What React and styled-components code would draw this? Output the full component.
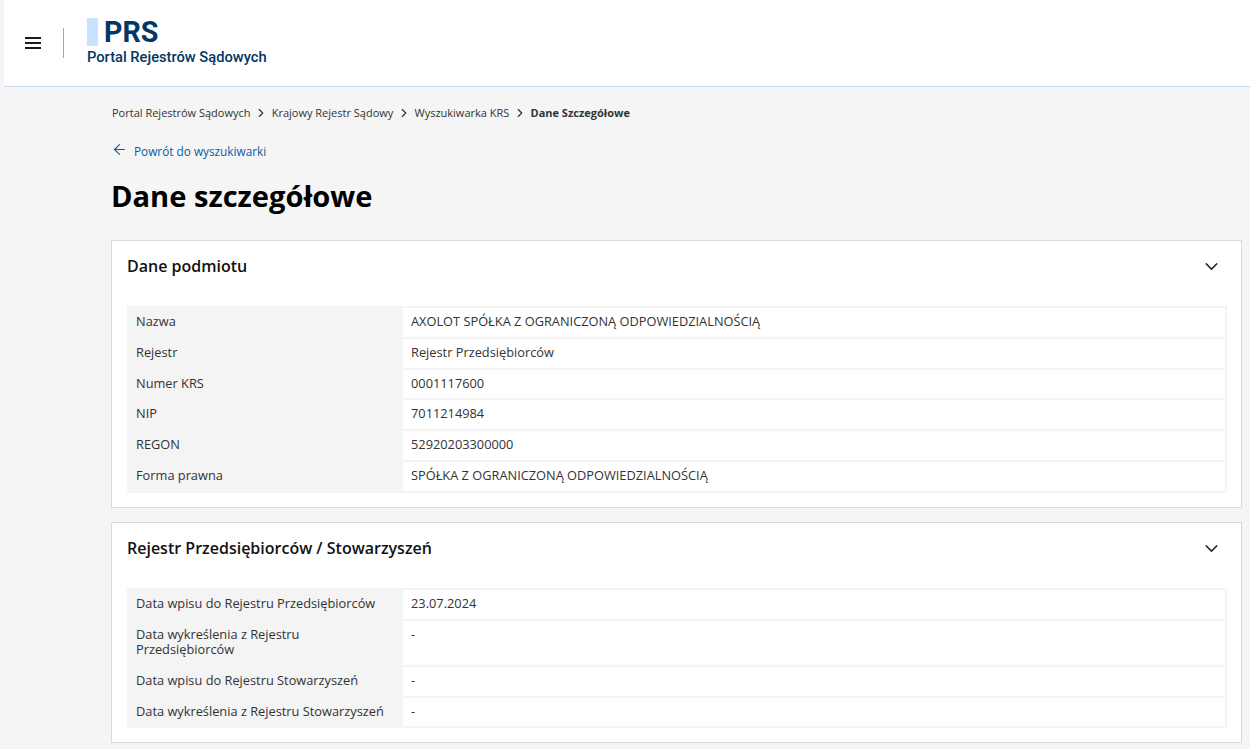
import React from "react";
import styled, { createGlobalStyle } from "styled-components";
import { ChevronDown, ChevronRight, ArrowLeft } from "lucide-react";

const GlobalStyle = createGlobalStyle`
  html, body {
    margin: 0;
    padding: 0;
    background: #f5f5f5;
    font-family: "Open Sans", sans-serif;
    color: #333;
    height: 749px;
    overflow: hidden;
  }
`;

const Page = styled.div`
  padding-left: 4px;
`;

const Header = styled.header`
  display: flex;
  align-items: center;
  height: 86px;
  background: #fff;
  border-bottom: 1px solid #c5d7e8;
`;

const MenuButton = styled.button`
  display: flex;
  flex-direction: column;
  gap: 3px;
  width: 16px;
  margin-left: 21px;
  padding: 0;
  border: 0;
  background: none;
  span {
    display: block;
    height: 2px;
    background: #1b1b1b;
  }
`;

const Divider = styled.div`
  width: 1px;
  height: 30px;
  margin: 0 23px 0 22px;
  background: #a6a6a6;
`;

const Logo = styled.div`
  display: flex;
  flex-direction: column;
  font-family: Roboto, sans-serif;
  color: #003764;
  margin-top: -2px;
`;

const LogoMark = styled.div`
  display: flex;
  align-items: center;
  gap: 6px;
  height: 28px;
  font-size: 28.6px;
  font-weight: 700;
  &::before {
    content: "";
    width: 11px;
    height: 28px;
    background: #c9e3ff;
  }
`;

const LogoText = styled.div`
  margin-top: 2px;
  font-size: 14.7px;
  font-weight: 500;
  line-height: 18px;
`;

const Main = styled.main`
  padding: 0 8px 0 107px;
`;

const Breadcrumbs = styled.nav`
  display: flex;
  align-items: center;
  padding: 18px 0 0 1px;
  height: 15px;
  font-size: 11px;
  line-height: 15px;
  color: #333;
  b {
    font-weight: 700;
  }
  svg {
    margin: 0 3.6px;
  }
`;

const BackLink = styled.a`
  display: flex;
  align-items: center;
  gap: 6px;
  margin: 23px 0 0 0;
  height: 16px;
  font-size: 11.8px;
  color: #0a5aa8;
  svg {
    margin-top: -3px;
  }
`;

const Title = styled.h1`
  margin: 17px 0 24px;
  font-size: 29.1px;
  line-height: 40px;
  font-weight: 700;
  color: #000;
`;

const Card = styled.section`
  margin-bottom: 14.7px;
  padding: 0 15px 14px;
  background: #fff;
  border: 1px solid #d9d9d9;
`;

const CardHead = styled.div`
  display: flex;
  align-items: center;
  justify-content: space-between;
  height: 50px;
  margin-bottom: 15px;
  h2 {
    margin: 0;
    font-size: 16px;
    font-weight: 600;
    color: #111;
  }
  svg {
    margin-right: 4px;
  }
`;

const Table = styled.table`
  width: 1100px;
  border-collapse: collapse;
  table-layout: fixed;
  font-size: 12.8px;
  line-height: 14.8px;
`;

const Label = styled.th`
  box-sizing: border-box;
  width: 274px;
  padding: 6px 8px 8px 7px;
  background: #f4f4f4;
  border: 2px solid #f4f4f4;
  font-weight: 400;
  text-align: left;
  vertical-align: top;
`;

const Value = styled.td`
  padding: 6px 8px 8px 8px;
  border: 2px solid #f4f4f4;
  vertical-align: top;
`;

const Details = ({ title, rows }) => (
  <Card>
    <CardHead>
      <h2>{title}</h2>
      <ChevronDown size={21} color="#1d2b3a" strokeWidth={1.7} />
    </CardHead>
    <Table>
      <tbody>
        {rows.map(([label, value]) => (
          <tr key={label}>
            <Label>{label}</Label>
            <Value>{value}</Value>
          </tr>
        ))}
      </tbody>
    </Table>
  </Card>
);

const subject = [
  ["Nazwa", "AXOLOT SPÓŁKA Z OGRANICZONĄ ODPOWIEDZIALNOŚCIĄ"],
  ["Rejestr", "Rejestr Przedsiębiorców"],
  ["Numer KRS", "0001117600"],
  ["NIP", "7011214984"],
  ["REGON", "52920203300000"],
  ["Forma prawna", "SPÓŁKA Z OGRANICZONĄ ODPOWIEDZIALNOŚCIĄ"],
];

const register = [
  ["Data wpisu do Rejestru Przedsiębiorców", "23.07.2024"],
  ["Data wykreślenia z Rejestru Przedsiębiorców", "-"],
  ["Data wpisu do Rejestru Stowarzyszeń", "-"],
  ["Data wykreślenia z Rejestru Stowarzyszeń", "-"],
];

export default function App() {
  return (
    <Page>
      <GlobalStyle />
      <Header>
        <MenuButton aria-label="Menu">
          <span />
          <span />
          <span />
        </MenuButton>
        <Divider />
        <Logo>
          <LogoMark>PRS</LogoMark>
          <LogoText>Portal Rejestrów Sądowych</LogoText>
        </Logo>
      </Header>
      <Main>
        <Breadcrumbs>
          Portal Rejestrów Sądowych
          <ChevronRight size={14} strokeWidth={2} />
          Krajowy Rejestr Sądowy
          <ChevronRight size={14} strokeWidth={2} />
          Wyszukiwarka KRS
          <ChevronRight size={14} strokeWidth={2} />
          <b>Dane Szczegółowe</b>
        </Breadcrumbs>
        <BackLink>
          <ArrowLeft size={17} strokeWidth={1.5} />
          Powrót do wyszukiwarki
        </BackLink>
        <Title>Dane szczegółowe</Title>
        <Details title="Dane podmiotu" rows={subject} />
        <Details title="Rejestr Przedsiębiorców / Stowarzyszeń" rows={register} />
      </Main>
    </Page>
  );
}
